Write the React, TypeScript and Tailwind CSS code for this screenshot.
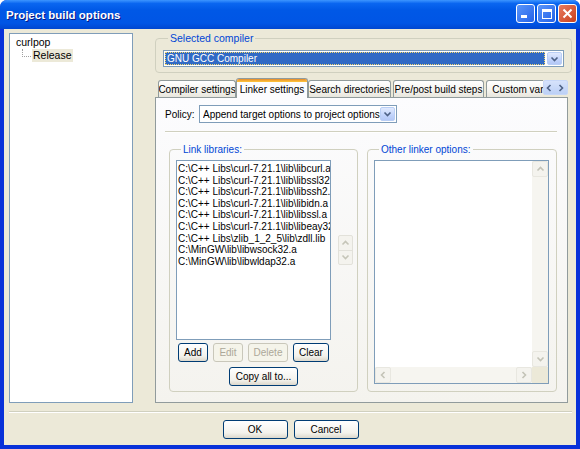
import React from "react";

const libs = [
  "C:\\C++ Libs\\curl-7.21.1\\lib\\libcurl.a",
  "C:\\C++ Libs\\curl-7.21.1\\lib\\libssl32.a",
  "C:\\C++ Libs\\curl-7.21.1\\lib\\libssh2.a",
  "C:\\C++ Libs\\curl-7.21.1\\lib\\libidn.a",
  "C:\\C++ Libs\\curl-7.21.1\\lib\\libssl.a",
  "C:\\C++ Libs\\curl-7.21.1\\lib\\libeay32.a",
  "C:\\C++ Libs\\zlib_1_2_5\\lib\\zdll.lib",
  "C:\\MinGW\\lib\\libwsock32.a",
  "C:\\MinGW\\lib\\libwldap32.a",
];

function Chevron({ dir, color = "#4D6185" }: { dir: "up" | "down" | "left" | "right"; color?: string }) {
  const paths = {
    down: "M1.5 2.5 L4.5 5.5 L7.5 2.5",
    up: "M1.5 5.5 L4.5 2.5 L7.5 5.5",
    left: "M5.5 1 L2.5 4 L5.5 7",
    right: "M2.5 1 L5.5 4 L2.5 7",
  };
  return (
    <svg width="9" height="8" viewBox="0 0 9 8">
      <path d={paths[dir]} fill="none" stroke={color} strokeWidth="1.6" />
    </svg>
  );
}

function DropButton() {
  return (
    <div className="w-[15px] h-full flex items-center justify-center rounded-[2px] border border-[#B9CEF5] bg-[linear-gradient(to_bottom,#E1EAFE,#C1D3FB_60%,#B4C8F6)]">
      <Chevron dir="down" />
    </div>
  );
}

function XpButton({ label, w, disabled }: { label: string; w: string; disabled?: boolean }) {
  return (
    <div
      className={`${w} h-[19px] flex items-center justify-center rounded-[3px] border ${
        disabled
          ? "border-[#C9C7BA] bg-[#F5F4EA] text-[#ACA899]"
          : "border-[#003C74] bg-[linear-gradient(to_bottom,#FFFFFF,#F3F2EC_70%,#DCD8CC)] text-black"
      }`}
    >
      {label}
    </div>
  );
}

function Tab({ label, w, active, ml }: { label: string; w: string; active?: boolean; ml?: string }) {
  if (active) {
    return (
      <div className={`${w} ${ml ?? ""} shrink-0 h-[20px] -mb-[1px] relative z-10 flex flex-col bg-[#FCFCFE] border border-b-0 border-[#919B9C] rounded-t-[3px] overflow-hidden`}>
        <div className="h-[3px] bg-[linear-gradient(to_bottom,#E68B2C,#FFC73C)]" />
        <div className="flex-1 flex items-center justify-center pb-[1px] whitespace-nowrap">{label}</div>
      </div>
    );
  }
  return (
    <div className={`${w} ${ml ?? ""} shrink-0 h-[17px] flex items-center justify-center whitespace-nowrap overflow-hidden bg-[linear-gradient(to_bottom,#FFFFFF,#F4F3EE_60%,#E8E6DD)] border border-b-0 border-[#919B9C] rounded-t-[3px]`}>
      {label}
    </div>
  );
}

function ScrollBtn({ dir }: { dir: "up" | "down" | "left" | "right" }) {
  return (
    <div className="w-[16px] h-[16px] shrink-0 flex items-center justify-center rounded-[2px] border border-[#E8E7E0] bg-[#F4F3EE]">
      <Chevron dir={dir} color="#C3C3B7" />
    </div>
  );
}

export default function App() {
  return (
    <div
      className="w-[580px] h-[449px] flex flex-col bg-[#0831D9] rounded-t-[7px] overflow-hidden text-[10px] text-black"
      style={{ fontFamily: '"Liberation Sans", Arial, sans-serif' }}
    >
      {/* Title bar */}
      <div className="h-[29px] shrink-0 flex items-start bg-[linear-gradient(to_bottom,#3D95FF_0%,#0A66F0_12%,#0058E6_35%,#0055E5_80%,#0046D0_100%)]">
        <div className="pl-[6px] pt-[7px] text-white font-bold text-[11.5px] [text-shadow:1px_1px_#0A1883]">
          Project build options
        </div>
        <div className="ml-auto mt-[4px] mr-[3px] flex gap-[2px]">
          <div className="w-[19px] h-[19px] rounded-[3px] border border-white bg-[linear-gradient(135deg,#5A96FA,#2462E8)] flex items-end pl-[4px] pb-[4px]">
            <div className="w-[6px] h-[3px] bg-white" />
          </div>
          <div className="w-[19px] h-[19px] rounded-[3px] border border-white bg-[linear-gradient(135deg,#5A96FA,#2462E8)] flex items-center justify-center">
            <div className="w-[10px] h-[10px] border border-white border-t-[3px]" />
          </div>
          <div className="w-[19px] h-[19px] rounded-[3px] border border-white bg-[linear-gradient(135deg,#E97B60,#C8401D)] flex items-center justify-center">
            <svg width="11" height="11" viewBox="0 0 11 11">
              <path d="M1.5 1.5 L9.5 9.5 M9.5 1.5 L1.5 9.5" stroke="white" strokeWidth="2" />
            </svg>
          </div>
        </div>
      </div>

      {/* Client area */}
      <div className="flex-1 mx-[4px] mb-[4px] bg-[#ECE9D8] flex flex-col pt-[4px] pl-[5px] pr-[4px]">
        <div className="flex">
          {/* Tree */}
          <div className="w-[124px] h-[370px] shrink-0 bg-white border border-[#7F9DB9] pl-[6px] pt-[2px] text-[10.5px]">
            <div className="h-[13px] leading-[13px]">curlpop</div>
            <div className="flex items-start">
              <div className="w-[9px] h-[8px] ml-[6px] border-l border-b border-dotted border-[#A0A0A0]" />
              <div className="ml-[1px] px-[1px] h-[13px] leading-[13px] bg-[#ECE9D8]">Release</div>
            </div>
          </div>

          {/* Right column */}
          <div className="ml-[22px] w-[417px] flex flex-col">
            <fieldset className="border border-[#D0D0BF] rounded-[4px] pl-[7px] pr-[7px] pt-[6px] pb-[5px]">
              <legend className="ml-[5px] px-[2px] text-[#0046D5] text-[10.5px] leading-[11px]">Selected compiler</legend>
              <div className="h-[17px] flex items-center bg-white border border-[#7F9DB9] pl-[1px] pr-[1px] py-[1px]">
                <div className="flex-1 h-full flex items-center bg-[#316AC5] text-white pl-[2px] outline-1 outline-dotted outline-[#F6D96B] -outline-offset-1">
                  GNU GCC Compiler
                </div>
                <div className="ml-[2px] h-full">
                  <DropButton />
                </div>
              </div>
            </fieldset>

            {/* Tabs */}
            <div className="mt-[5px] h-[19px] flex items-end">
              <div className="w-[388px] h-[20px] flex items-end overflow-hidden -mb-[1px] pb-[1px]">
                <Tab label="Compiler settings" w="w-[78px]" ml="ml-[3px]" />
                <Tab label="Linker settings" w="w-[72px]" active />
                <Tab label="Search directories" w="w-[83px]" />
                <Tab label="Pre/post build steps" w="w-[91px]" ml="ml-[2px]" />
                <Tab label="Custom variables" w="w-[90px]" ml="ml-[2px]" />
              </div>
              <div className="w-[25px] h-[15px] mb-[2px] flex items-center justify-around bg-[linear-gradient(to_bottom,#D6E2FB,#BCD0F6)] border border-[#C7D7F7] rounded-[2px]">
                <Chevron dir="left" />
                <Chevron dir="right" />
              </div>
            </div>

            {/* Tab panel */}
            <div className="w-[413px] h-[306px] border border-[#919B9C] bg-[linear-gradient(to_bottom,#FCFCFE,#F4F3EE)] pt-[7px] pl-[9px] pr-[10px]">
              <div className="flex items-center h-[18px]">
                <div className="w-[34px]">Policy:</div>
                <div className="w-[198px] h-[18px] flex items-center bg-white border border-[#7F9DB9] pl-[3px] pr-[1px] py-[1px]">
                  <div className="flex-1 whitespace-nowrap overflow-hidden">Append target options to project options</div>
                  <div className="h-full">
                    <DropButton />
                  </div>
                </div>
              </div>
              <div className="mt-[8px] h-[2px] border-t border-[#D0D0BF] border-b border-b-white" />

              <div className="mt-[11px] ml-[4px] flex gap-[9px]">
                {/* Link libraries */}
                <fieldset className="w-[190px] h-[248px] border border-[#D0D0BF] rounded-[4px] pl-[6px] pt-[5px]">
                  <legend className="ml-[5px] px-[2px] text-[#0046D5] leading-[11px]">Link libraries:</legend>
                  <div className="flex items-center">
                    <div className="w-[155px] h-[180px] bg-white border border-[#7F9DB9] pl-[1px] pt-[2px] overflow-hidden">
                      {libs.map((l) => (
                        <div key={l} className="whitespace-nowrap leading-[11.6px]">
                          {l}
                        </div>
                      ))}
                    </div>
                    <div className="ml-[7px] w-[15px] h-[30px] flex flex-col rounded-[2px] border border-[#E2E1DA] bg-[#F4F3EE]">
                      <div className="flex-1 flex items-center justify-center border-b border-[#E2E1DA]">
                        <Chevron dir="up" color="#C5C5B8" />
                      </div>
                      <div className="flex-1 flex items-center justify-center">
                        <Chevron dir="down" color="#C5C5B8" />
                      </div>
                    </div>
                  </div>
                  <div className="mt-[3px] ml-[2px] flex gap-[5px]">
                    <XpButton label="Add" w="w-[30px]" />
                    <XpButton label="Edit" w="w-[30px]" disabled />
                    <XpButton label="Delete" w="w-[40px]" disabled />
                    <XpButton label="Clear" w="w-[36px]" />
                  </div>
                  <div className="mt-[5px] flex justify-center pr-[6px]">
                    <XpButton label="Copy all to..." w="w-[69px]" />
                  </div>
                </fieldset>

                {/* Other linker options */}
                <fieldset className="w-[191px] h-[248px] border border-[#D0D0BF] rounded-[4px] pl-[6px] pt-[5px]">
                  <legend className="ml-[5px] px-[2px] text-[#0046D5] leading-[11px]">Other linker options:</legend>
                  <div className="w-[175px] h-[224px] bg-white border border-[#7F9DB9] flex flex-col">
                    <div className="flex-1 flex">
                      <div className="flex-1" />
                      <div className="w-[16px] flex flex-col bg-[#F6F5F0]">
                        <ScrollBtn dir="up" />
                        <div className="flex-1" />
                        <ScrollBtn dir="down" />
                      </div>
                    </div>
                    <div className="h-[16px] flex bg-[#F6F5F0]">
                      <ScrollBtn dir="left" />
                      <div className="flex-1" />
                      <ScrollBtn dir="right" />
                      <div className="w-[16px] bg-[#ECE9D8]" />
                    </div>
                  </div>
                </fieldset>
              </div>
            </div>
          </div>
        </div>

        {/* Bottom separator + buttons */}
        <div className="mt-[8px] h-[2px] border-t border-[#D0D0BF] border-b border-b-white" />
        <div className="mt-[7px] flex justify-center gap-[6px]">
          <XpButton label="OK" w="w-[65px]" />
          <XpButton label="Cancel" w="w-[65px]" />
        </div>
      </div>
    </div>
  );
}
